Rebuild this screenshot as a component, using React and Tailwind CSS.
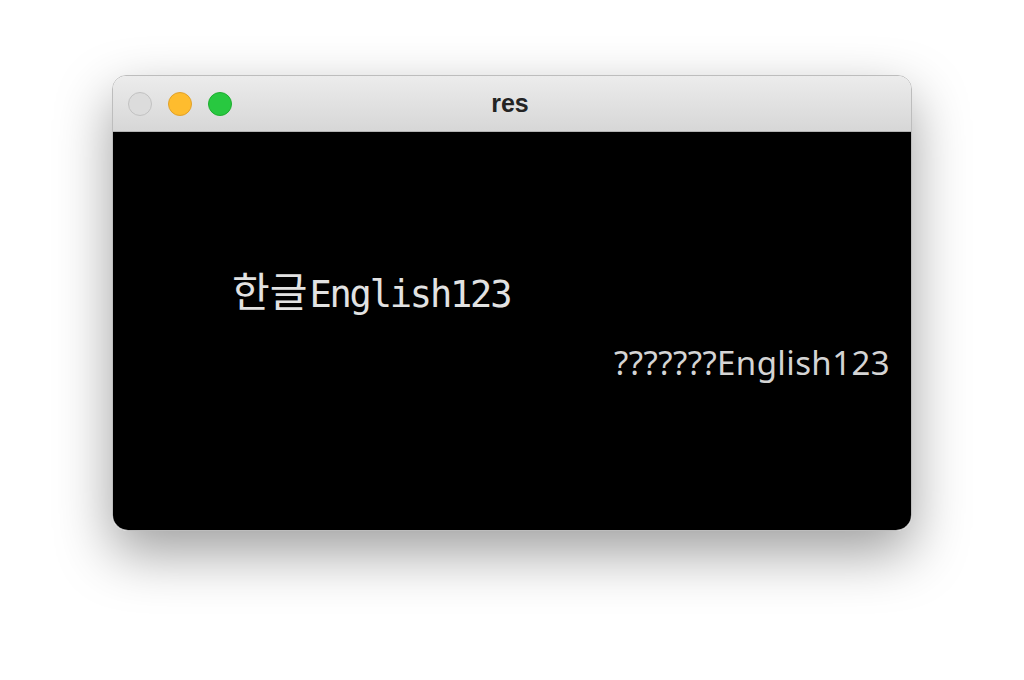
export default function App() {
  return (
    <div className="w-[1024px] h-[680px] bg-white pt-[75px] pl-[112px]">
      <div className="w-[800px] h-[456px] rounded-t-[14px] rounded-b-[16px] overflow-hidden shadow-[0_22px_55px_rgba(0,0,0,0.38)] border border-[#bdbdbd] flex flex-col">
        <div className="h-[56px] shrink-0 bg-gradient-to-b from-[#ececec] to-[#d7d7d7] border-b border-[#b4b4b4] flex items-center relative">
          <div className="flex items-center gap-[16px] pl-[15px]">
            <div className="w-[24px] h-[24px] rounded-full bg-[#dcdcdc] border border-[#c2c2c2]" />
            <div className="w-[24px] h-[24px] rounded-full bg-[#febc2e] border border-[#e1a12a]" />
            <div className="w-[24px] h-[24px] rounded-full bg-[#28c840] border border-[#1eae2f]" />
          </div>
          <div className="absolute inset-0 flex items-center justify-center pointer-events-none">
            <span className="text-[25px] font-bold text-[#242424] font-['Liberation_Sans',Arial,sans-serif] pr-[4px]">res</span>
          </div>
        </div>
        <div className="flex-1 bg-black flex flex-col">
          <div className="pt-[139px] pl-[119px] text-[37px] leading-[37px] tracking-[-2.2px] text-[#e2e2e2] font-['DejaVu_Sans_Mono','Noto_Sans_CJK_KR',monospace] whitespace-nowrap">
            <span className="tracking-[0px] font-['Noto_Sans_CJK_KR',sans-serif] text-[41px] leading-[37px] mr-[2px]">한글</span>English123
          </div>
          <div className="mt-[33px] pr-[21px] self-end text-[33px] leading-none text-[#d4d4d4] font-['Noto_Sans',sans-serif] whitespace-nowrap tracking-[0.4px]">
            ???????English123
          </div>
        </div>
      </div>
    </div>
  );
}
